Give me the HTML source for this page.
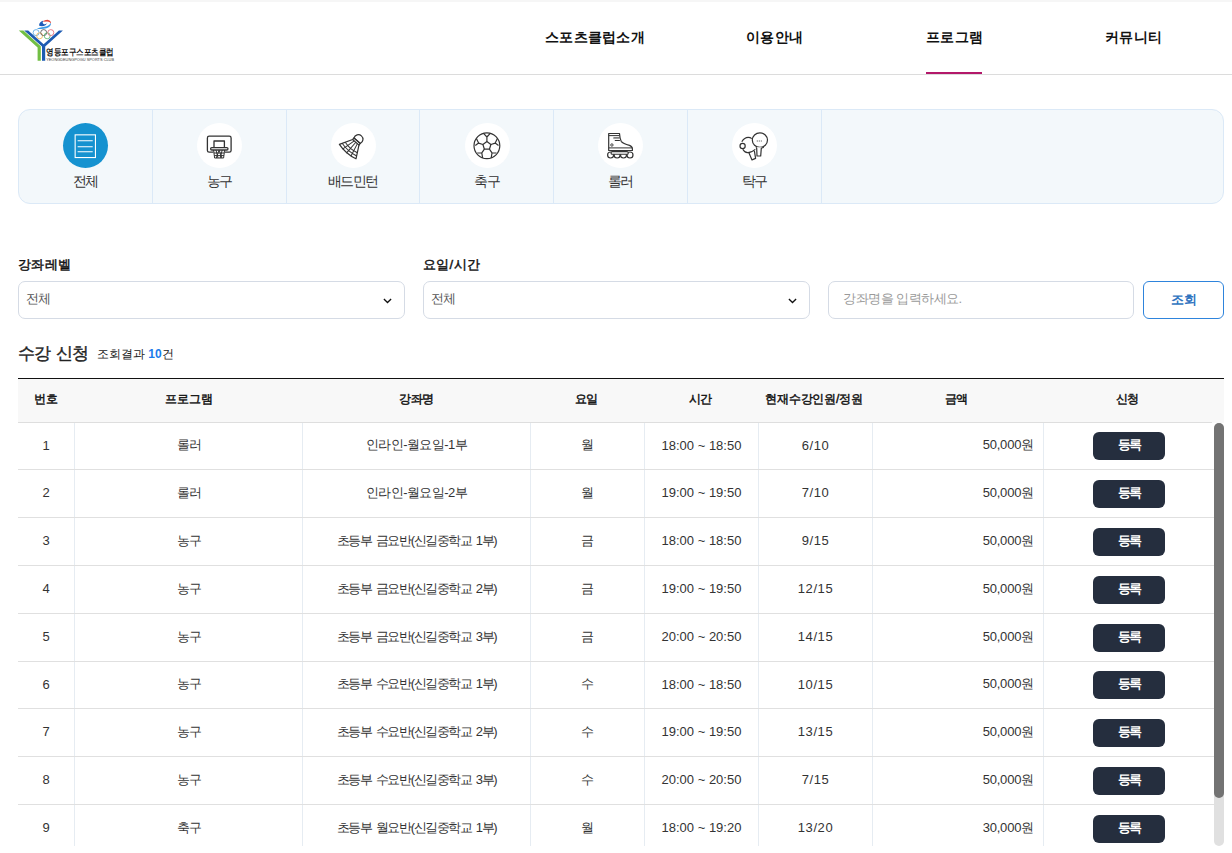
<!DOCTYPE html>
<html><head><meta charset="utf-8">
<style>
*{margin:0;padding:0;box-sizing:border-box}
html,body{width:1232px;height:853px;overflow:hidden;background:#fff}
body{font-family:"Liberation Sans",sans-serif;color:#222;position:relative}
.abs{position:absolute}
#topbar{left:0;top:0;width:1232px;height:2px;background:#f6f6f6}
#hdrline{left:0;top:74px;width:1232px;height:1px;background:#dcdcdc}
.nav{top:27px;height:20px;line-height:20px;font-size:14px;font-weight:bold;color:#111;white-space:nowrap;letter-spacing:0.3px}
#navbar{left:926px;top:72px;width:56px;height:2px;background:#b3186a}
#cat{left:18px;top:109px;width:1206px;height:95px;border:1px solid #dbe9f7;border-radius:12px;background:#f3f8fb}
.cell{position:absolute;top:0;height:93px;border-right:1px solid #dbe9f7}
.circ{position:absolute;width:45px;height:45px;border-radius:50%;background:#fff;top:13px}
.clab{position:absolute;top:63px;width:100%;text-align:center;font-size:13.5px;color:#333;line-height:18px;letter-spacing:-1.5px}
.lbl{top:256px;font-size:13px;font-weight:normal;-webkit-text-stroke:0.45px #111;color:#111;line-height:18px;letter-spacing:0.3px}
.sel{top:281px;height:38px;border:1px solid #d5dbe5;border-radius:7px;background:#fff}
.sel span{position:absolute;left:7px;top:8px;font-size:13px;color:#555;line-height:18px;letter-spacing:-1.5px}
.chev{position:absolute;top:16px;width:9px;height:5.5px}
#btn{left:1143px;top:281px;width:81px;height:38px;border:1px solid #2e84dc;border-radius:6px;background:#fff;color:#2f74c0;font-weight:bold;font-size:13px;text-align:center;line-height:35px}
#title{left:18px;top:342px;font-size:17px;font-weight:normal;letter-spacing:-0.7px;word-spacing:1px;-webkit-text-stroke:0.4px #222;color:#222;line-height:24px;white-space:nowrap}
#cnt{left:97px;top:345px;font-size:12px;color:#222;line-height:18px;white-space:nowrap}
#cnt b{color:#1a7ceb}
#tline{left:18px;top:378px;width:1206px;height:1px;background:#111}
#thead{left:18px;top:379px;width:1206px;height:44px;background:#f8f8f8}
#thline{left:18px;top:422px;width:1194px;height:1px;background:#dedede}
.th{position:absolute;top:11px;font-size:12px;letter-spacing:-0.2px;font-weight:normal;-webkit-text-stroke:0.45px #111;color:#111;line-height:18px;text-align:center}
.row{position:absolute;left:18px;width:1196px;border-bottom:1px solid #e0e0e0}
.td{position:absolute;top:0;height:100%;border-right:1px solid #e6ecf2;font-size:13px;letter-spacing:-0.55px;color:#333;text-align:center;display:flex;padding-bottom:2px;align-items:center;justify-content:center;white-space:nowrap}
.td.amt{justify-content:flex-end;padding-right:9px;letter-spacing:-0.2px}
.td.num{letter-spacing:0}
.td.prog{padding-left:1px}
.td.long{letter-spacing:-1.4px;word-spacing:2px}
.td.cap{letter-spacing:0.6px}
.td.last{border-right:none;padding-bottom:0}
.reg{width:72px;height:28px;border-radius:6px;background:#252e3e;color:#fff;font-weight:bold;font-size:13px;letter-spacing:-1.5px;line-height:26px;text-align:center}
#track{left:1214px;top:423px;width:10px;height:423px;border-radius:5px;background:#e0e0e0}
#thumb{left:1214px;top:423px;width:10px;height:375px;border-radius:5px;background:#737373}
</style></head><body>
<div id="topbar" class="abs"></div>

<!-- logo -->
<svg class="abs" style="left:0;top:0" width="130" height="70" viewBox="0 0 130 70">
  <path d="M36.8 28.4Q41 29.6 46.5 28.2Q51.5 26.5 51 22.5Q49.5 26 44.5 26.8Q40 27.4 36.8 28.4Z" fill="#3a9ae6"/>
  <path d="M39 25.5Q39.5 21.5 43.5 20.6Q41.6 23.5 44 24.2Q46.5 24.6 47.5 22.5Q46 26.2 42 26.2Q40 26.2 39 25.5Z" fill="#1f5cb8"/>
  <path d="M42.5 21.8Q45 19.6 48.2 19.9Q51.2 20.4 50.9 23.4Q49.8 21.4 47.2 21.4Q44.6 21.4 42.5 21.8Z" fill="#e04438"/>
  <g fill="none" stroke-width="0.75">
    <circle cx="36.1" cy="32.6" r="3" stroke="#4a9ee0"/>
    <circle cx="39.6" cy="35.8" r="3" stroke="#f2b04a"/>
    <circle cx="43.7" cy="32.6" r="3" stroke="#444"/>
    <circle cx="47.2" cy="35.8" r="3" stroke="#4ab060"/>
    <circle cx="50.8" cy="32.6" r="3" stroke="#e05a6a"/>
  </g>
  <path d="M18.8 30.4H23.4L40.8 46.2V60.7H37.6V47.6Z" fill="#72bf44"/>
  <path d="M24.2 30.4H28.2L43.6 44.2L58.9 30.4H62.9L45.2 46.6V60.7H42V46.6Z" fill="#1d5bb2"/>
  <text x="46.2" y="55.3" textLength="67.8" lengthAdjust="spacingAndGlyphs" font-family="Liberation Sans" font-weight="bold" font-size="8.6" fill="#111">영등포구스포츠클럽</text>
  <text x="46.2" y="60.6" textLength="67.8" lengthAdjust="spacingAndGlyphs" font-family="Liberation Sans" font-size="4.3" fill="#3a3a3a">YEONGDEUNGPOGU SPORTS CLUB</text>
</svg>

<div class="abs nav" style="left:545px">스포츠클럽소개</div>
<div class="abs nav" style="left:746px">이용안내</div>
<div class="abs nav" style="left:926px">프로그램</div>
<div class="abs nav" style="left:1105px">커뮤니티</div>
<div id="navbar" class="abs"></div>
<div id="hdrline" class="abs"></div>

<div id="cat" class="abs">
  <div class="cell" style="left:0.000px;width:133.778px"><div class="circ" style="left:44.39px;background:#1592d0"><svg width="45" height="45" viewBox="0 0 45 45" style="position:absolute;left:0;top:0"><g fill="none" stroke="#fff" stroke-width="1.1"><rect x="12.15" y="11.85" width="20.3" height="22.7"/><path d="M14.6 17.7H29.7M14.6 23.8H29.7M14.6 28.8H29.7" stroke-width="1.05"/></g></svg>
</div><div class="clab">전체</div></div>
<div class="cell" style="left:133.778px;width:133.778px"><div class="circ" style="left:44.39px;background:#fff">
<svg width="45" height="45" viewBox="0 0 45 45" style="position:absolute;left:0;top:0"><g fill="none" stroke="#333" stroke-width="1.3" stroke-linejoin="round"><path d="M16.4 29.2H12.2Q10.4 29.2 10.4 27.4V15Q10.4 13.2 12.2 13.2H32.3Q34.1 13.2 34.1 15V27.4Q34.1 29.2 32.3 29.2H28"/><path d="M17 24.6V18H27.4V24.6"/><rect x="13.6" y="24.6" width="17.4" height="2.4" rx="1.2"/><path d="M16.6 27L17.6 35H26.6L27.6 27M16.9 30L27.3 30M17.3 32.6L27 32.6M19 27L21 35M22.1 27L19.3 35M22.1 27L24.9 35M25.2 27L23.2 35" stroke-width="1"/></g></svg>
</div><div class="clab">농구</div></div>
<div class="cell" style="left:267.556px;width:133.778px"><div class="circ" style="left:44.39px;background:#fff">
<svg width="45" height="45" viewBox="0 0 45 45" style="position:absolute;left:0;top:0"><g transform="translate(22.6 21.8) rotate(41)" fill="none" stroke="#333" stroke-width="1.2" stroke-linejoin="round"><path d="M-4.2 -5.4A4.6 4.6 0 1 1 4.2 -5.4Z"/><path d="M-4.2 -5.4H4.2L4.2 -3.4H-4.2Z"/><path d="M-4.2 -3.4L-11 9Q0 12 11 9L4.2 -3.4"/><path d="M-2.1 -3.4L-5.5 10.5M0 -3.4L0 11M2.1 -3.4L5.5 10.5M-8 3.5Q0 5.8 8 3.5M-9.6 6.4Q0 9 9.6 6.4" stroke-width="1"/></g></svg>
</div><div class="clab">배드민턴</div></div>
<div class="cell" style="left:401.333px;width:133.778px"><div class="circ" style="left:44.39px;background:#fff">
<svg width="45" height="45" viewBox="0 0 45 45" style="position:absolute;left:0;top:0"><g fill="none" stroke="#333" stroke-width="1.2" stroke-linejoin="round"><circle cx="21.9" cy="22.8" r="12.9"/><path d="M21.9 18.6L25.9 21.5L24.4 26.2L19.4 26.2L17.9 21.5Z"/><path d="M21.9 18.6V14L18.3 10.2M21.9 14L25.5 10.2M25.9 21.5L30.2 20.1L33.5 22.5M30.2 20.1L32.4 15.6M24.4 26.2L27 29.9L26.2 35M27 29.9L31.6 30M19.4 26.2L16.8 29.9L17.6 35M16.8 29.9L12.2 30M17.9 21.5L13.6 20.1L10.3 22.5M13.6 20.1L11.4 15.6"/></g></svg>
</div><div class="clab">축구</div></div>
<div class="cell" style="left:535.111px;width:133.778px"><div class="circ" style="left:44.39px;background:#fff">
<svg width="45" height="45" viewBox="0 0 45 45" style="position:absolute;left:0;top:0"><g fill="none" stroke="#333" stroke-width="1.2" stroke-linejoin="round"><circle cx="12.6" cy="32" r="3"/><circle cx="19.1" cy="32" r="3"/><circle cx="25.5" cy="32" r="3"/><circle cx="32" cy="32" r="3"/><rect x="13" y="28.6" width="17.3" height="2.7" rx="1.3" fill="#fff" stroke-width="1.1"/><path d="M10.7 27.5V10.5H21.5Q21.9 16 23.2 18.3Q25 20.6 31.5 22.4Q34.4 23.6 34.4 25.8V27.5Z" fill="#fff"/><path d="M10.7 12.6H21.5M10.7 24.9H34.2M15.4 14.9H21.6M16.8 17.5H21.9" stroke-width="1"/><path d="M15.4 15.6H21.6" stroke="#999" stroke-width="0.8"/><circle cx="13.9" cy="22" r="1.2" stroke-width="0.9"/></g></svg>
</div><div class="clab">롤러</div></div>
<div class="cell" style="left:668.889px;width:133.778px"><div class="circ" style="left:44.39px;background:#fff">
<svg width="45" height="45" viewBox="0 0 45 45" style="position:absolute;left:0;top:0"><g fill="none" stroke="#333" stroke-width="1.2" stroke-linejoin="round"><path d="M9.8 18.7Q12.5 14.4 16.2 14.4Q18.3 14.4 19.8 15.6"/><path d="M10.8 26.2Q12.5 29.4 15.5 29.7Q19 30 23.3 26.4"/><path d="M16.8 29.6L20 36.9L23.6 35.4L22.4 28"/><ellipse cx="27.9" cy="17.1" rx="7.6" ry="7.2"/><path d="M24 24.3L24.7 25.3L25 33H28.7L29.3 25.3L31.8 24.2" fill="#fff"/><circle cx="10.6" cy="23" r="2.6"/><path d="M24.8 18H30.4" stroke-width="0.9" stroke-dasharray="1 1"/></g></svg>
</div><div class="clab">탁구</div></div>
</div>

<div class="abs lbl" style="left:18px">강좌레벨</div>
<div class="abs lbl" style="left:423px">요일/시간</div>
<div class="abs sel" style="left:18px;width:387px"><span>전체</span>
  <svg class="chev" style="left:364px" viewBox="0 0 10 6"><path d="M1 1 L5 5 L9 1" fill="none" stroke="#111" stroke-width="1.45"/></svg></div>
<div class="abs sel" style="left:423px;width:387px"><span>전체</span>
  <svg class="chev" style="left:364px" viewBox="0 0 10 6"><path d="M1 1 L5 5 L9 1" fill="none" stroke="#111" stroke-width="1.45"/></svg></div>
<div class="abs sel" style="left:828px;width:306px"><span style="left:14px;color:#9a9a9a;letter-spacing:-0.5px">강좌명을 입력하세요.</span></div>
<div id="btn" class="abs">조회</div>

<div id="title" class="abs">수강 신청</div>
<div id="cnt" class="abs">조회결과 <b>10</b>건</div>
<div id="tline" class="abs"></div>
<div id="thead" class="abs">
  <div class="th" style="left:-0.3px;width:57px">번호</div>
<div class="th" style="left:57px;width:228px">프로그램</div>
<div class="th" style="left:284.5px;width:228px">강좌명</div>
<div class="th" style="left:511.5px;width:114px">요일</div>
<div class="th" style="left:625.5px;width:114px">시간</div>
<div class="th" style="left:739px;width:114px">현재수강인원/정원</div>
<div class="th" style="left:853px;width:171px">금액</div>
<div class="th" style="left:1024.5px;width:170px">신청</div>
</div>
<div id="thline" class="abs"></div>
<div class="abs" style="left:0;top:423px;width:1232px;height:423px;overflow:hidden"><div class="row" style="top:0px;height:47px"><div class="td num" style="left:0px;width:57px">1</div><div class="td prog" style="left:57px;width:228px">롤러</div><div class="td" style="left:285px;width:228px">인라인-월요일-1부</div><div class="td" style="left:513px;width:114px">월</div><div class="td num" style="left:627px;width:114px">18:00 ~ 18:50</div><div class="td cap" style="left:741px;width:114px">6/10</div><div class="td amt" style="left:855px;width:171px">50,000원</div><div class="td last" style="left:1026px;width:170px"><div class="reg">등록</div></div></div>
<div class="row" style="top:47px;height:48px"><div class="td num" style="left:0px;width:57px">2</div><div class="td prog" style="left:57px;width:228px">롤러</div><div class="td" style="left:285px;width:228px">인라인-월요일-2부</div><div class="td" style="left:513px;width:114px">월</div><div class="td num" style="left:627px;width:114px">19:00 ~ 19:50</div><div class="td cap" style="left:741px;width:114px">7/10</div><div class="td amt" style="left:855px;width:171px">50,000원</div><div class="td last" style="left:1026px;width:170px"><div class="reg">등록</div></div></div>
<div class="row" style="top:95px;height:48px"><div class="td num" style="left:0px;width:57px">3</div><div class="td prog" style="left:57px;width:228px">농구</div><div class="td long" style="left:285px;width:228px">초등부 금요반(신길중학교 1부)</div><div class="td" style="left:513px;width:114px">금</div><div class="td num" style="left:627px;width:114px">18:00 ~ 18:50</div><div class="td cap" style="left:741px;width:114px">9/15</div><div class="td amt" style="left:855px;width:171px">50,000원</div><div class="td last" style="left:1026px;width:170px"><div class="reg">등록</div></div></div>
<div class="row" style="top:143px;height:48px"><div class="td num" style="left:0px;width:57px">4</div><div class="td prog" style="left:57px;width:228px">농구</div><div class="td long" style="left:285px;width:228px">초등부 금요반(신길중학교 2부)</div><div class="td" style="left:513px;width:114px">금</div><div class="td num" style="left:627px;width:114px">19:00 ~ 19:50</div><div class="td cap" style="left:741px;width:114px">12/15</div><div class="td amt" style="left:855px;width:171px">50,000원</div><div class="td last" style="left:1026px;width:170px"><div class="reg">등록</div></div></div>
<div class="row" style="top:191px;height:48px"><div class="td num" style="left:0px;width:57px">5</div><div class="td prog" style="left:57px;width:228px">농구</div><div class="td long" style="left:285px;width:228px">초등부 금요반(신길중학교 3부)</div><div class="td" style="left:513px;width:114px">금</div><div class="td num" style="left:627px;width:114px">20:00 ~ 20:50</div><div class="td cap" style="left:741px;width:114px">14/15</div><div class="td amt" style="left:855px;width:171px">50,000원</div><div class="td last" style="left:1026px;width:170px"><div class="reg">등록</div></div></div>
<div class="row" style="top:239px;height:47px"><div class="td num" style="left:0px;width:57px">6</div><div class="td prog" style="left:57px;width:228px">농구</div><div class="td long" style="left:285px;width:228px">초등부 수요반(신길중학교 1부)</div><div class="td" style="left:513px;width:114px">수</div><div class="td num" style="left:627px;width:114px">18:00 ~ 18:50</div><div class="td cap" style="left:741px;width:114px">10/15</div><div class="td amt" style="left:855px;width:171px">50,000원</div><div class="td last" style="left:1026px;width:170px"><div class="reg">등록</div></div></div>
<div class="row" style="top:286px;height:48px"><div class="td num" style="left:0px;width:57px">7</div><div class="td prog" style="left:57px;width:228px">농구</div><div class="td long" style="left:285px;width:228px">초등부 수요반(신길중학교 2부)</div><div class="td" style="left:513px;width:114px">수</div><div class="td num" style="left:627px;width:114px">19:00 ~ 19:50</div><div class="td cap" style="left:741px;width:114px">13/15</div><div class="td amt" style="left:855px;width:171px">50,000원</div><div class="td last" style="left:1026px;width:170px"><div class="reg">등록</div></div></div>
<div class="row" style="top:334px;height:48px"><div class="td num" style="left:0px;width:57px">8</div><div class="td prog" style="left:57px;width:228px">농구</div><div class="td long" style="left:285px;width:228px">초등부 수요반(신길중학교 3부)</div><div class="td" style="left:513px;width:114px">수</div><div class="td num" style="left:627px;width:114px">20:00 ~ 20:50</div><div class="td cap" style="left:741px;width:114px">7/15</div><div class="td amt" style="left:855px;width:171px">50,000원</div><div class="td last" style="left:1026px;width:170px"><div class="reg">등록</div></div></div>
<div class="row" style="top:382px;height:48px"><div class="td num" style="left:0px;width:57px">9</div><div class="td prog" style="left:57px;width:228px">축구</div><div class="td long" style="left:285px;width:228px">초등부 월요반(신길중학교 1부)</div><div class="td" style="left:513px;width:114px">월</div><div class="td num" style="left:627px;width:114px">18:00 ~ 19:20</div><div class="td cap" style="left:741px;width:114px">13/20</div><div class="td amt" style="left:855px;width:171px">30,000원</div><div class="td last" style="left:1026px;width:170px"><div class="reg">등록</div></div></div></div>
<div id="track" class="abs"></div>
<div id="thumb" class="abs"></div>
</body></html>
